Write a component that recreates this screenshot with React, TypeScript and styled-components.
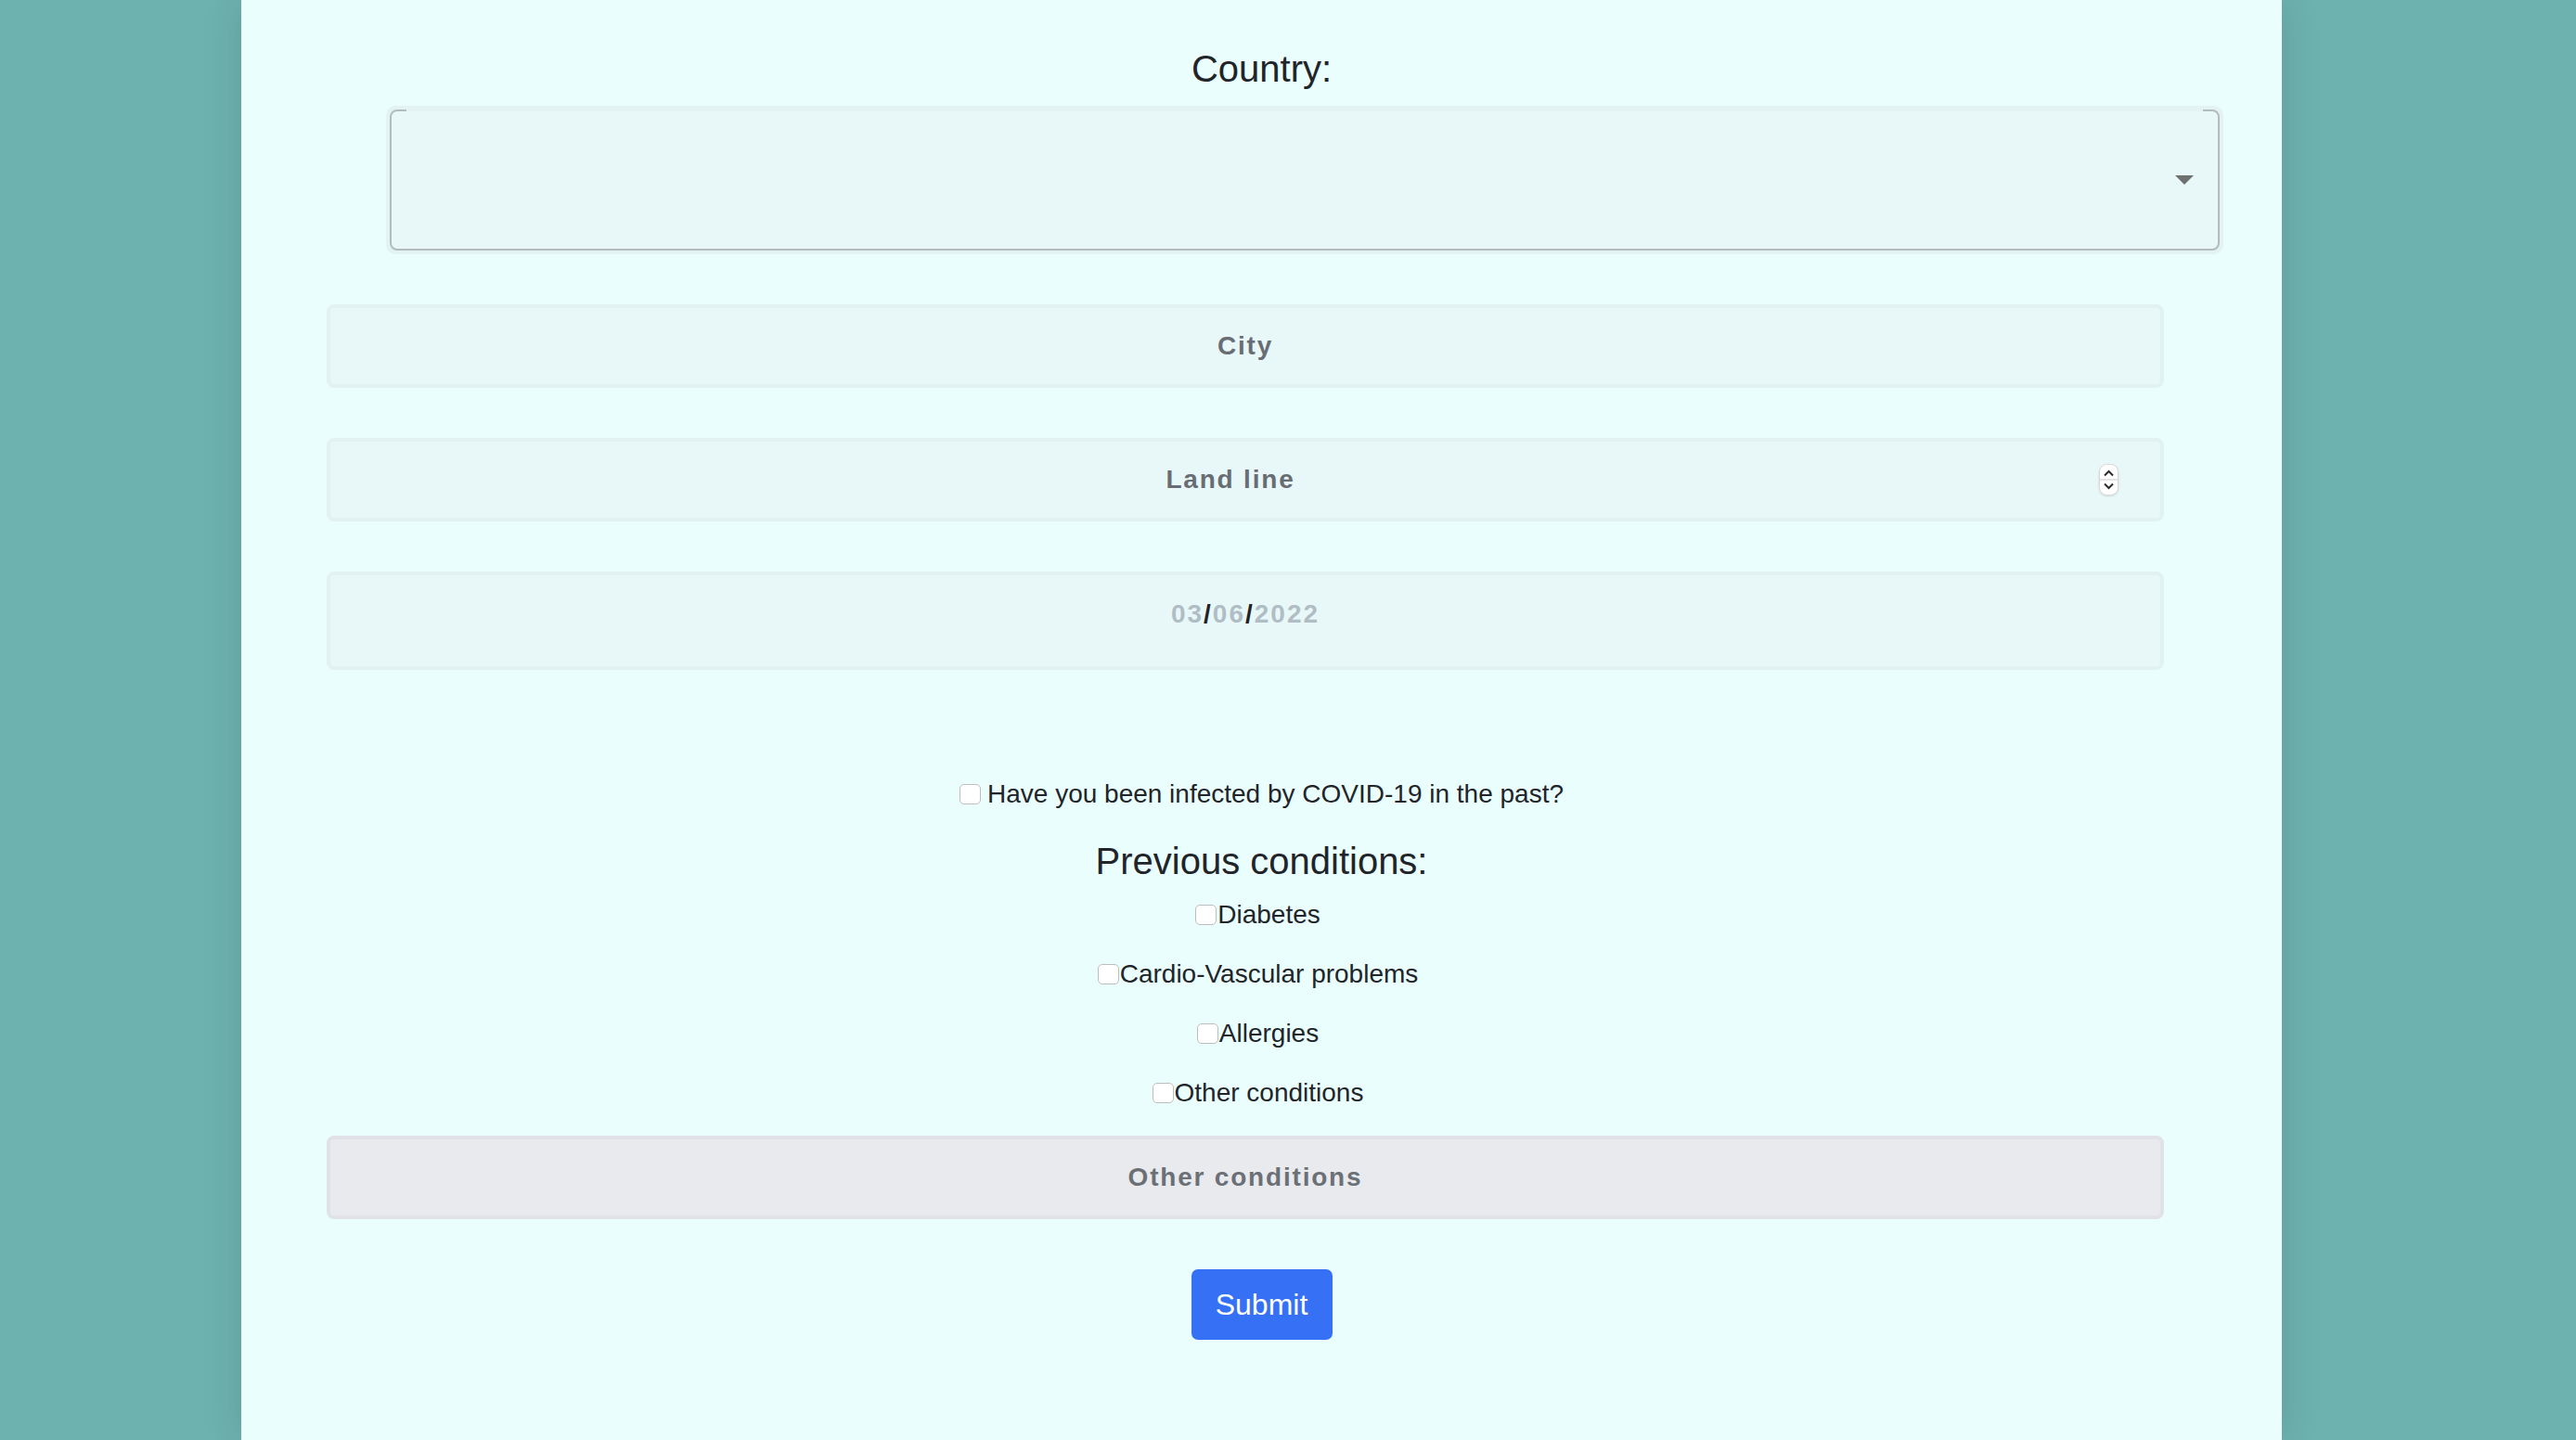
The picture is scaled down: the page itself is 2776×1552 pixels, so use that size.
import React from 'react';
import styled, { createGlobalStyle } from 'styled-components';

const conditions = ['Diabetes', 'Cardio-Vascular problems', 'Allergies', 'Other conditions'];

const App: React.FC = () => {
  return (
    <>
      <GlobalStyle />
      <Panel onSubmit={(e) => e.preventDefault()}>
        <Heading as="label">Country:</Heading>

        <FieldStack>
          <SelectWrap>
            <SelectBox>
              <Caret />
            </SelectBox>
          </SelectWrap>

          <FieldShell>
            <Input placeholder="City" />
          </FieldShell>

          <FieldShell>
            <Input placeholder="Land line" $padRight={32} />
            <Spinner>
              <svg width="21" height="34" viewBox="0 0 21 34">
                <rect x="0.5" y="0.5" width="20" height="33" rx="8" fill="#fff" stroke="#d6d6d6" />
                <line x1="1" y1="17" x2="20" y2="17" stroke="#dcdcdc" strokeWidth="1.5" />
                <path d="M6 12.5 L10.5 8 L15 12.5" stroke="#2b2b2b" strokeWidth="2" fill="none" />
                <path d="M6 21.5 L10.5 26 L15 21.5" stroke="#2b2b2b" strokeWidth="2" fill="none" />
              </svg>
            </Spinner>
          </FieldShell>

          <FieldShell $height={106} $padBottom={14}>
            <DateText>
              <DatePart>03</DatePart>/<DatePart>06</DatePart>/<DatePart>2022</DatePart>
            </DateText>
          </FieldShell>
        </FieldStack>

        <CheckRow $top={118}>
          <Check type="checkbox" $gap={7} />
          Have you been infected by COVID-19 in the past?
        </CheckRow>

        <Heading $top={34}>Previous conditions:</Heading>

        <CheckList>
          {conditions.map((c) => (
            <CheckRow key={c} $padRight={8}>
              <Check type="checkbox" $gap={1} />
              {c}
            </CheckRow>
          ))}
        </CheckList>

        <FieldShell $tone="grey" $top={30}>
          <Input placeholder="Other conditions" $tone="grey" />
        </FieldShell>

        <SubmitButton type="submit">Submit</SubmitButton>
      </Panel>
    </>
  );
};

export default App;

const GlobalStyle = createGlobalStyle`
  body {
    margin: 0;
    background: #6db2af;
    font-family: "Liberation Sans", Arial, sans-serif;
  }
`;

const Panel = styled.form`
  box-sizing: border-box;
  width: 2199px;
  min-height: 100vh;
  margin-left: 260px;
  padding: 52px 0 108px;
  background: #eafefe;
  box-shadow: 0 0 40px rgba(0, 0, 0, 0.13);
  display: flex;
  flex-direction: column;
`;

const Heading = styled.h2<{ $top?: number }>`
  margin: ${(p) => p.$top ?? 0}px 0 0;
  font-size: 40px;
  line-height: 45px;
  font-weight: normal;
  color: #212529;
  text-align: center;
`;

const FieldStack = styled.div`
  margin-top: 17px;
  display: flex;
  flex-direction: column;
  gap: 54px;
`;

const SelectWrap = styled.div`
  box-sizing: border-box;
  width: 1980px;
  margin-left: 156px;
  padding: 4px;
  background: #e3f3f3;
  border-radius: 10px;
`;

const SelectBox = styled.div`
  position: relative;
  box-sizing: border-box;
  height: 152px;
  border: 2px solid #b3bcbc;
  border-radius: 8px;
  background: #e8f8f8;
  display: flex;
  align-items: center;
  justify-content: flex-end;
  padding-right: 26px;

  &::before {
    content: '';
    position: absolute;
    top: -2px;
    left: 16px;
    right: 16px;
    height: 2px;
    background: #e4f4f4;
  }
`;

const Caret = styled.span`
  width: 0;
  height: 0;
  border-left: 10px solid transparent;
  border-right: 10px solid transparent;
  border-top: 10px solid #6f7070;
`;

const FieldShell = styled.div<{ $height?: number; $tone?: 'grey'; $top?: number; $padBottom?: number }>`
  position: relative;
  box-sizing: border-box;
  width: 1980px;
  height: ${(p) => p.$height ?? 90}px;
  margin: ${(p) => p.$top ?? 0}px 0 0 92px;
  padding-bottom: ${(p) => p.$padBottom ?? 0}px;
  border: 4px solid ${(p) => (p.$tone === 'grey' ? '#e1e2e7' : '#e2f2f2')};
  border-radius: 8px;
  background: ${(p) => (p.$tone === 'grey' ? '#e9eaee' : '#e8f8f8')};
  display: flex;
  align-items: center;
  justify-content: center;
`;

const Input = styled.input<{ $padRight?: number; $tone?: 'grey' }>`
  flex: 1;
  height: 100%;
  box-sizing: border-box;
  padding: 0 ${(p) => p.$padRight ?? 0}px 0 0;
  border: none;
  outline: none;
  background: transparent;
  text-align: center;
  font-family: "Liberation Sans", Arial, sans-serif;
  font-size: 28px;
  font-weight: bold;
  letter-spacing: 1.8px;
  color: #686d75;

  &::placeholder {
    color: ${(p) => (p.$tone === 'grey' ? '#6b7077' : '#686d75')};
    opacity: 1;
  }
`;

const Spinner = styled.span`
  position: absolute;
  right: 45px;
  top: 50%;
  transform: translateY(-50%);
  display: flex;
  filter: drop-shadow(0 1px 1px rgba(0, 0, 0, 0.12));
`;

const DateText = styled.div`
  font-size: 28px;
  font-weight: bold;
  letter-spacing: 2px;
  color: #222;
`;

const DatePart = styled.span`
  color: #b1bdc5;
`;

const CheckList = styled.div`
  margin-top: 19px;
  display: flex;
  flex-direction: column;
  gap: 32px;
`;

const CheckRow = styled.label<{ $top?: number; $padRight?: number }>`
  margin-top: ${(p) => p.$top ?? 0}px;
  padding-right: ${(p) => p.$padRight ?? 0}px;
  height: 32px;
  display: flex;
  align-items: center;
  justify-content: center;
  font-size: 28px;
  line-height: 32px;
  color: #212529;
`;

const Check = styled.input<{ $gap: number }>`
  appearance: none;
  box-sizing: border-box;
  width: 23px;
  height: 22px;
  margin: 0 ${(p) => p.$gap}px 0 0;
  border: 1px solid #bdbdbd;
  border-radius: 5px;
  background: #fff;
  flex-shrink: 0;
`;

const SubmitButton = styled.button`
  align-self: center;
  margin-top: 54px;
  width: 152px;
  height: 76px;
  border: none;
  border-radius: 7px;
  background: #3570f5;
  color: #fff;
  font-family: "Liberation Sans", Arial, sans-serif;
  font-size: 32px;
`;
